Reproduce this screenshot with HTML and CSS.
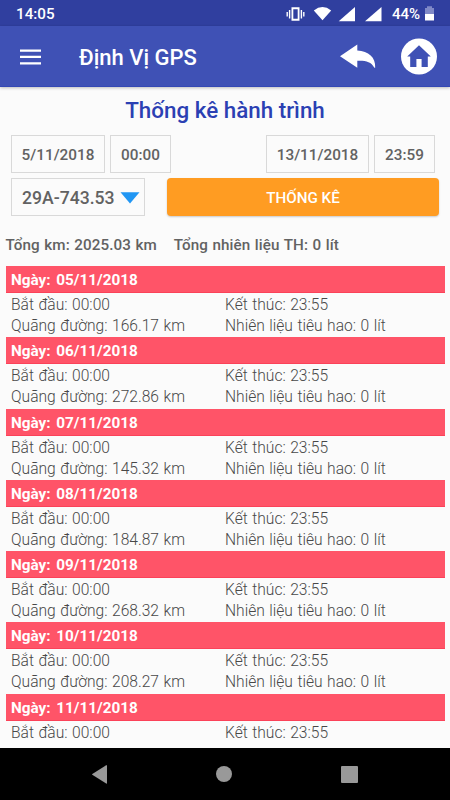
FILE: index.html
```html
<!DOCTYPE html>
<html lang="vi">
<head>
    <meta charset="UTF-8">
    <meta name="viewport" content="width=device-width, initial-scale=1.0">
    <title>Định Vị GPS</title>
    <link rel="stylesheet" href="styles.css">
</head>
<body>
    <div class="status-bar">
        <span class="clock">14:05</span>
        <svg class="status-icons" width="96" height="20" viewBox="0 0 96 20" fill="#fff">
            <path d="M5.5 3.3h8v13.4h-8zM7.3 5.2v9.6h4.4V5.2z" fill-rule="evenodd"/>
            <path d="M2.9 6h1.4v8.5H2.9zM.5 8h1.4v4.5H.5zM14.7 6h1.4v8.5h-1.4zM17.1 8h1.4v4.5h-1.4z"/>
            <path d="M27.8 6.4Q36.5-.4 45.2 6.4L36.5 16.3z"/>
            <path d="M52.7 17.3L69 3V17.3z"/>
            <path d="M79 17.3L95.5 3V17.3z"/>
        </svg>
        <span class="percent">44%</span>
        <svg class="battery" width="9" height="15" viewBox="0 0 9 15">
            <path d="M0 2h2V.3h5V2h2v6H0z" fill="#8089c7"/>
            <path d="M0 8h9v6.5H0z" fill="#fff"/>
        </svg>
    </div>
    <header class="app-bar">
        <svg class="menu-icon" width="21" height="16" viewBox="0 0 21 16" fill="#fff">
            <path d="M0 .5h21v2.2H0zM0 6.8h21V9H0zM0 13.2h21v2.2H0z"/>
        </svg>
        <h1>Định Vị GPS</h1>
        <svg class="back-icon" width="36" height="25" viewBox="0 0 36 25" fill="#fff">
            <path d="M0 12.2L17.3.5v6C28.5 7 35.8 13.3 35.2 23.8h-.8C31 17.3 25.5 16.4 17.3 16.7v7.1z"/>
        </svg>
        <svg class="home-icon" width="36" height="37" viewBox="0 0 36 37">
            <circle cx="18" cy="18.5" r="18" fill="#fff"/>
            <path d="M18 7.2L6.2 18.6h3V29h6.2v-8h5.2v8h6.2V18.6h3z" fill="#3f51b5"/>
        </svg>
    </header>
    <main class="content">
        <h2>Thống kê hành trình</h2>
        <div class="date-row">
            <span class="field date-from">5/11/2018</span>
            <span class="field time">00:00</span>
            <span class="field date-to">13/11/2018</span>
            <span class="field time">23:59</span>
        </div>
        <div class="action-row">
            <div class="field vehicle">
                <span>29A-743.53</span>
                <svg width="20" height="12" viewBox="0 0 20 12"><path d="M.5.3h19L10 11.5z" fill="#2196f3"/></svg>
            </div>
            <button class="submit">THỐNG KÊ</button>
        </div>
        <div class="totals">
            <span class="total-km">Tổng km: 2025.03 km</span>
            <span class="total-fuel">Tổng nhiên liệu TH: 0 lít</span>
        </div>
        <div class="trips" id="trips"></div>
    </main>
    <nav class="nav-bar">
        <svg width="15" height="19" viewBox="0 0 15 19"><path d="M15 .5v17.6q0 .8-.8.4L.3 9.8q-.5-.4 0-.8L14.2.2q.8-.4.8.3z" fill="#999"/></svg>
        <svg width="16" height="16" viewBox="0 0 16 16"><circle cx="8" cy="8" r="8" fill="#999"/></svg>
        <svg width="17" height="17" viewBox="0 0 17 17"><rect width="17" height="17" rx="1" fill="#999"/></svg>
    </nav>

    <script>
        const trips = [
            ['05/11/2018', '166.17'],
            ['06/11/2018', '272.86'],
            ['07/11/2018', '145.32'],
            ['08/11/2018', '184.87'],
            ['09/11/2018', '268.32'],
            ['10/11/2018', '208.27'],
            ['11/11/2018', null]
        ];

        // the last trip is cut off by the navigation bar
        document.getElementById('trips').innerHTML = trips.map(([day, km]) => `
            <section class="trip">
                <h3><span>Ngày: ${day}</span></h3>
                <div class="trip-info">
                    <span class="start">Bắt đầu: 00:00</span>
                    <span class="end">Kết thúc: 23:55</span>
                    ${km ? `<span class="distance">Quãng đường: ${km} km</span>
                    <span class="fuel">Nhiên liệu tiêu hao: 0 lít</span>` : ''}
                </div>
            </section>`).join('');
    </script>
</body>
</html>
```

FILE: styles.css
```css
:root {
    --primary-color: #3f51b5;
    --primary-dark: #303f9f;
    --accent-color: #ff9c22;
    --day-color: #ff5468;
    --text-color: #626262;
    --trip-text-color: #484848;
    --border-color: #d9d9d9;
    --background-color: #fbfbfb;
}
* {
    box-sizing: border-box;
}
body {
    display: flex;
    flex-direction: column;
    height: 800px;
    margin: 0;
    overflow: hidden;
    font-family: Roboto, "Noto Sans", sans-serif;
    background: var(--background-color);
    color: var(--text-color);
    white-space: nowrap;
}
svg {
    display: block;
    flex: none;
}
h1, h2, h3 {
    margin: 0;
    font-weight: 500;
}
.status-bar {
    display: flex;
    align-items: center;
    flex: none;
    height: 26px;
    padding: 1px 16px 0;
    background: var(--primary-dark);
    color: #fff;
    font-weight: 500;
    font-size: 15.2px;
}
.status-icons {
    margin-left: auto;
}
.percent {
    width: 29px;
    margin-left: 10px;
    font-size: 15px;
}
.battery {
    margin-left: 4px;
}
.app-bar {
    display: flex;
    align-items: center;
    flex: none;
    height: 61px;
    padding: 0 13px 0 20px;
    background: var(--primary-color);
    border-bottom: 1px solid #3448b4;
    box-shadow: 0 1px 3px rgba(0, 0, 0, 0.25);
    color: #fff;
    z-index: 1;
}
.menu-icon {
    margin-top: 1px;
}
.app-bar h1 {
    margin: 3px 0 0 38px;
    font-size: 22px;
}
.back-icon {
    margin-left: auto;
}
.home-icon {
    margin-left: 25px;
}
.content {
    flex: 1;
    min-height: 0;
    overflow: hidden;
}
h2 {
    height: 48px;
    line-height: 47px;
    text-align: center;
    font-size: 22.4px;
    color: #2b40b3;
}
.date-row, .action-row {
    display: flex;
    padding: 0 15px 0 11px;
}
.date-row {
    gap: 5px;
}
.field {
    display: flex;
    align-items: center;
    justify-content: center;
    height: 38px;
    padding-top: 1px;
    border: 1px solid var(--border-color);
    font-size: 15.3px;
    font-weight: 500;
}
.date-from {
    width: 94px;
}
.time {
    width: 61px;
}
.date-to {
    width: 103px;
    margin-left: auto;
}
.action-row {
    padding: 5px 11px 0;
}
.vehicle {
    justify-content: space-between;
    width: 134px;
    padding: 1px 4px 0 10px;
    font-size: 17.6px;
}
.submit {
    flex: 1;
    height: 38px;
    margin-left: 22px;
    padding: 1px 0 0;
    border: none;
    border-radius: 4px;
    background: var(--accent-color);
    box-shadow: 0 1px 2px rgba(0, 0, 0, 0.2);
    color: #fff;
    font-family: inherit;
    font-size: 15.2px;
    font-weight: 500;
}
.totals {
    display: flex;
    gap: 17px;
    height: 50px;
    padding: 0 5.5px;
    line-height: 58px;
    font-size: 15.2px;
    font-weight: 500;
    letter-spacing: 0.1px;
    word-spacing: 0.6px;
}
.trips {
    padding: 0 5.5px;
}
.trip {
    height: 71.25px;
}
.trip h3 {
    height: 27px;
    padding-left: 5.5px;
    background: var(--day-color);
    border-bottom: 1px solid #fb4259;
    color: #fff;
    font-size: 15.3px;
    font-weight: 700;
    line-height: 29px;
    word-spacing: 1.8px;
}
.trip-info {
    display: grid;
    grid-template-columns: 214px 1fr;
    padding: 2px 0 0 5.5px;
    color: var(--trip-text-color);
    font-size: 15.6px;
    font-weight: 300;
    word-spacing: 0.7px;
    line-height: 21.2px;
}
.nav-bar {
    display: flex;
    align-items: center;
    justify-content: space-between;
    flex: none;
    height: 52px;
    padding: 0 92px;
    background: #000;
}
```
